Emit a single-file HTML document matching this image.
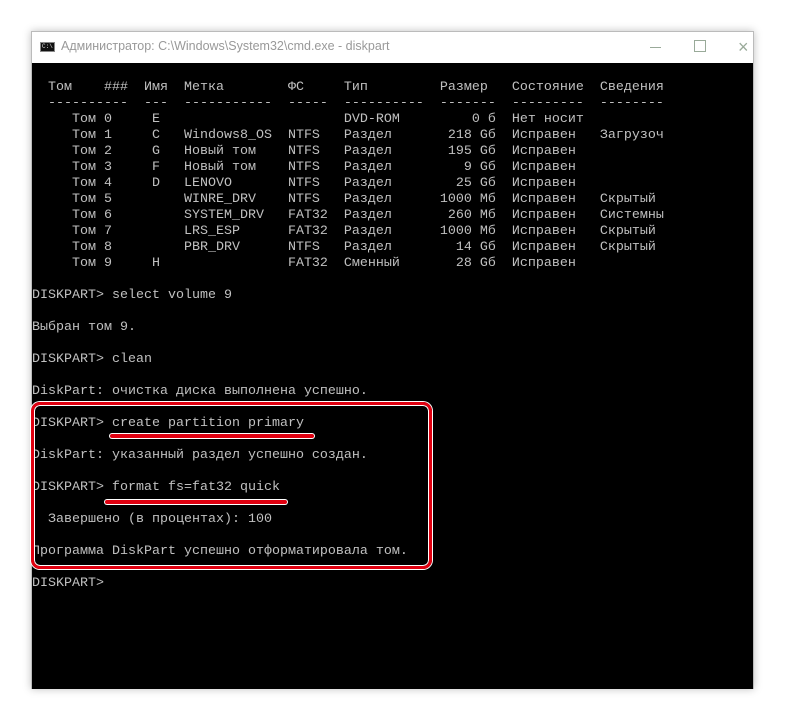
<!DOCTYPE html>
<html><head><meta charset="utf-8"><style>
html,body{margin:0;padding:0;background:#fff;width:786px;height:720px;overflow:hidden;position:relative}
#win{position:absolute;left:31px;top:31px;width:723px;height:658px;background:#fff;box-shadow:0 0 8px rgba(0,0,0,0.25);border:1px solid #bbb;box-sizing:border-box}
#title{position:absolute;left:0;top:0;width:100%;height:31px;background:#fff}
#ttxt{position:absolute;left:29px;top:7px;font:12.5px "Liberation Sans","DejaVu Sans",sans-serif;color:#999}
#icon{position:absolute;left:8px;top:10px;width:15px;height:10px;background:#111;border:1px solid #888;box-sizing:border-box;color:#ddd;font:6px "Liberation Mono",monospace;line-height:8px;padding-left:1px}
#con{position:absolute;left:0;top:31px;width:721px;height:626px;background:#000;overflow:hidden}
pre{margin:0;position:absolute;left:0;top:17px;font:13.33px/16px "Liberation Mono","DejaVu Sans Mono",monospace;color:#c0c0c0}
.box{position:absolute;left:31px;top:402px;width:401px;height:167px;border:3px solid #e00010;border-radius:9px;box-sizing:border-box;box-shadow:inset 0 0 0 1px #fff,0 0 0 1px #fff}
.ul{position:absolute;height:4px;background:#e00010;border-radius:2px;box-shadow:0 0 0 1px #fff}
</style></head><body>
<div id="win">
<div id="title"><div id="icon">C:\</div><div id="ttxt">Администратор: C:\Windows\System32\cmd.exe - diskpart</div>
<div style="position:absolute;left:618px;top:15px;width:11px;height:1px;background:#9a9"></div>
<div style="position:absolute;left:662px;top:8px;width:10px;height:10px;border:1px solid #9a9"></div>
<div style="position:absolute;left:706px;top:5px;font:18px 'Liberation Sans',sans-serif;color:#9a9">×</div>
</div>
<div id="con"><pre id="p"></pre></div>
</div>
<div class="box"></div>
<div class="ul" style="left:110px;top:434px;width:204px"></div>
<div class="ul" style="left:105px;top:500px;width:182px"></div>
<script>
function P(s,n){s=String(s);while(s.length<n)s+=' ';return s}
function L(s,n){s=String(s);while(s.length<n)s=' '+s;return s}
var rows=[["Том 0","E","","","DVD-ROM","0 б","Нет носит",""],
["Том 1","C","Windows8_OS","NTFS","Раздел","218 Gб","Исправен","Загрузоч"],
["Том 2","G","Новый том","NTFS","Раздел","195 Gб","Исправен",""],
["Том 3","F","Новый том","NTFS","Раздел","9 Gб","Исправен",""],
["Том 4","D","LENOVO","NTFS","Раздел","25 Gб","Исправен",""],
["Том 5","","WINRE_DRV","NTFS","Раздел","1000 Mб","Исправен","Скрытый"],
["Том 6","","SYSTEM_DRV","FAT32","Раздел","260 Mб","Исправен","Системны"],
["Том 7","","LRS_ESP","FAT32","Раздел","1000 Mб","Исправен","Скрытый"],
["Том 8","","PBR_DRV","NTFS","Раздел","14 Gб","Исправен","Скрытый"],
["Том 9","H","","FAT32","Сменный","28 Gб","Исправен",""]];
var out=["  Том    ###  Имя  Метка        ФС     Тип         Размер   Состояние  Сведения",
"  ----------  ---  -----------  -----  ----------  -------  ---------  --------"];
rows.forEach(function(r){out.push(P("     "+r[0],15)+P(r[1],4)+P(r[2],13)+P(r[3],7)+P(r[4],12)+L(r[5],7)+"  "+P(r[6],11)+r[7]);});
out=out.concat(["","DISKPART&gt; select volume 9","","Выбран том 9.","","DISKPART&gt; clean","","DiskPart: очистка диска выполнена успешно.","","DISKPART&gt; create partition primary","","DiskPart: указанный раздел успешно создан.","","DISKPART&gt; format fs=fat32 quick","","  Завершено (в процентах): 100","","Программа DiskPart успешно отформатировала том.","","DISKPART&gt;"]);
document.getElementById('p').innerHTML=out.join("\n");
</script>
</body></html>
